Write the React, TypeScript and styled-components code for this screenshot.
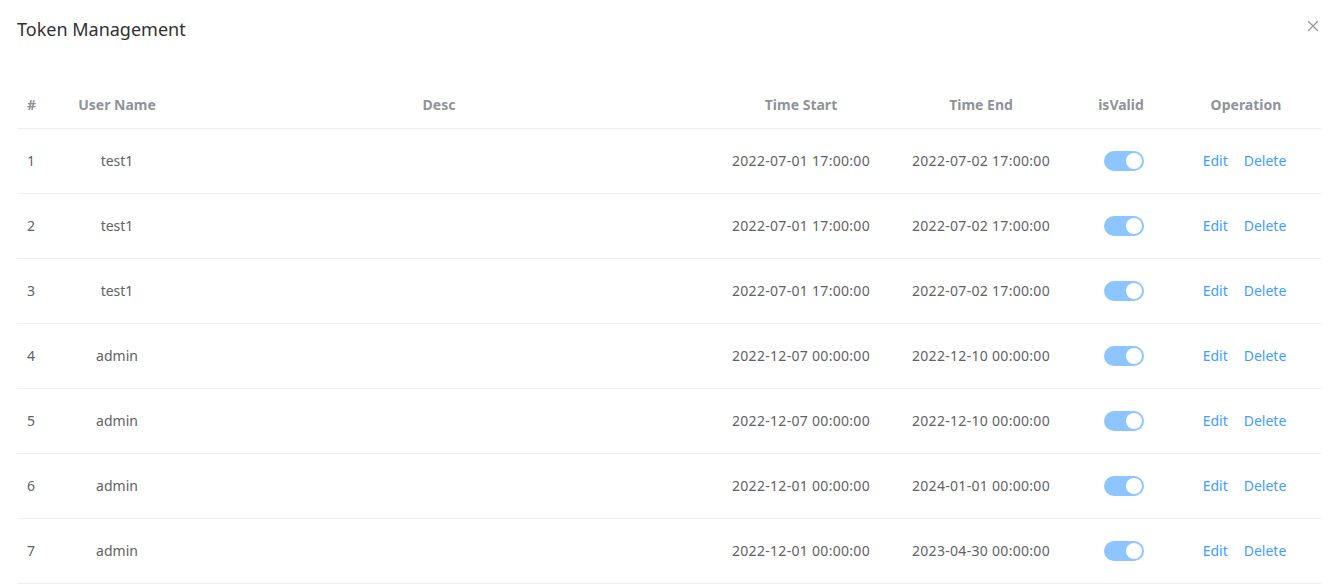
import React from 'react'
import styled, { createGlobalStyle } from 'styled-components'

const GlobalStyle = createGlobalStyle`
  body {
    margin: 0;
    background: #fff;
    font-family: "Noto Sans", "Liberation Sans", sans-serif;
  }
`

const Dialog = styled.div`
  padding: 0 16px 0 17px;
  background: #fff;
`

const Header = styled.div`
  display: flex;
  align-items: center;
  justify-content: space-between;
  height: 58px;
`

const Title = styled.span`
  font-size: 18px;
  color: #303133;
  line-height: 24px;
`

const CloseButton = styled.button`
  border: none;
  background: none;
  padding: 0;
  margin-right: 2px;
  margin-top: -6px;
  color: #909399;
  cursor: pointer;
  display: flex;
`

const Table = styled.table`
  width: 100%;
  margin-top: 22px;
  border-collapse: collapse;
  table-layout: fixed;
  font-size: 14px;
  color: #606266;
`

const HeadCell = styled.th<{ $align?: string }>`
  height: 48px;
  padding: 0 10px;
  font-weight: 700;
  color: #909399;
  text-align: ${({ $align }) => $align || 'center'};
  border-bottom: 1px solid #ebeef5;
`

const Cell = styled.td<{ $align?: string; $mono?: boolean }>`
  height: 62px;
  padding: 0 10px 2px;
  text-align: ${({ $align }) => $align || 'center'};
  letter-spacing: ${({ $mono }) => ($mono ? '0.3px' : 'normal')};
  border-bottom: 1px solid #ebeef5;
  white-space: nowrap;
`

const Switch = styled.span<{ $on: boolean }>`
  display: inline-block;
  position: relative;
  width: 40px;
  height: 20px;
  margin-left: 6px;
  margin-top: 2px;
  border-radius: 10px;
  background: ${({ $on }) => ($on ? '#8cc5ff' : '#dcdfe6')};
  vertical-align: middle;

  &::after {
    content: '';
    position: absolute;
    top: 2px;
    left: ${({ $on }) => ($on ? '22px' : '2px')};
    width: 16px;
    height: 16px;
    border-radius: 50%;
    background: #fff;
  }
`

const Ops = styled.div`
  display: flex;
  justify-content: center;
  gap: 16px;
  margin-left: -3px;
`

const LinkButton = styled.a`
  color: #409eff;
  text-decoration: none;
  cursor: pointer;
`

const columns = [
  { key: 'idx', label: '#', width: 50, align: 'left' },
  { key: 'name', label: 'User Name', width: 100 },
  { key: 'desc', label: 'Desc', width: 544 },
  { key: 'start', label: 'Time Start', width: 180 },
  { key: 'end', label: 'Time End', width: 180 },
  { key: 'valid', label: 'isValid', width: 100 },
  { key: 'op', label: 'Operation', width: 150 },
]

const tokens = [
  { name: 'test1', start: '2022-07-01 17:00:00', end: '2022-07-02 17:00:00' },
  { name: 'test1', start: '2022-07-01 17:00:00', end: '2022-07-02 17:00:00' },
  { name: 'test1', start: '2022-07-01 17:00:00', end: '2022-07-02 17:00:00' },
  { name: 'admin', start: '2022-12-07 00:00:00', end: '2022-12-10 00:00:00' },
  { name: 'admin', start: '2022-12-07 00:00:00', end: '2022-12-10 00:00:00' },
  { name: 'admin', start: '2022-12-01 00:00:00', end: '2024-01-01 00:00:00' },
  { name: 'admin', start: '2022-12-01 00:00:00', end: '2023-04-30 00:00:00' },
]

export default function App() {
  return (
    <Dialog>
      <GlobalStyle />
      <Header>
        <Title>Token Management</Title>
        <CloseButton aria-label="close">
          <svg width="12" height="12" viewBox="0 0 12 12" stroke="currentColor" strokeWidth="1.1">
            <path d="M1 1 L11 11 M11 1 L1 11" />
          </svg>
        </CloseButton>
      </Header>
      <Table>
        <colgroup>
          {columns.map((c) => (
            <col key={c.key} style={{ width: c.width }} />
          ))}
        </colgroup>
        <thead>
          <tr>
            {columns.map((c) => (
              <HeadCell key={c.key} $align={c.align}>
                {c.label}
              </HeadCell>
            ))}
          </tr>
        </thead>
        <tbody>
          {tokens.map((t, i) => (
            <tr key={i}>
              <Cell $align="left">{i + 1}</Cell>
              <Cell>{t.name}</Cell>
              <Cell />
              <Cell $mono>{t.start}</Cell>
              <Cell $mono>{t.end}</Cell>
              <Cell>
                <Switch $on />
              </Cell>
              <Cell>
                <Ops>
                  <LinkButton>Edit</LinkButton>
                  <LinkButton>Delete</LinkButton>
                </Ops>
              </Cell>
            </tr>
          ))}
        </tbody>
      </Table>
    </Dialog>
  )
}
